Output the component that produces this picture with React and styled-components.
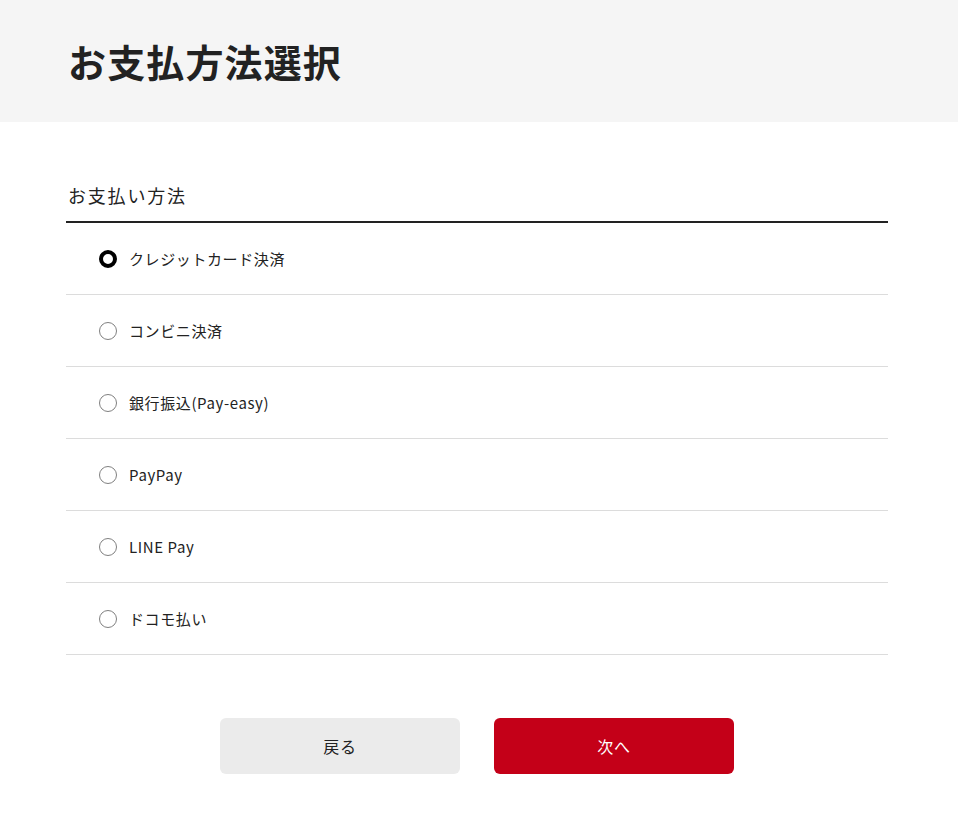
import React, { useState } from 'react';
import styled, { createGlobalStyle } from 'styled-components';

const GlobalStyle = createGlobalStyle`
  body {
    margin: 0;
    background: #fff;
    color: #222;
    font-family: "Noto Sans CJK JP", "Noto Sans", sans-serif;
  }
`;

const Header = styled.header`
  background: #f5f5f5;
  height: 122px;
  display: flex;
  align-items: center;
  padding-left: 68px;
`;

const Title = styled.h1`
  margin: 0;
  font-size: 38px;
  font-weight: 700;
  letter-spacing: 0.03em;
  line-height: 1;
  color: #222;
`;

const Main = styled.main`
  padding: 59px 70px 0 66px;
`;

const SectionTitle = styled.h2`
  margin: 0;
  font-size: 18px;
  font-weight: 400;
  line-height: 28px;
  letter-spacing: 0.1em;
  padding: 0 0 12px 2px;
  border-bottom: 2px solid #222;
`;

const List = styled.ul`
  list-style: none;
  margin: 0;
  padding: 0;
`;

const Row = styled.li`
  height: 71px;
  border-bottom: 1px solid #dcdcdc;
  display: flex;
  align-items: center;
  padding-left: 33px;
  gap: 12px;
  cursor: pointer;
`;

const Radio = styled.span`
  box-sizing: border-box;
  width: 18px;
  height: 18px;
  border-radius: 50%;
  background: #fff;
  border: ${(p) => (p.$checked ? '4px solid #000' : '1px solid #808080')};
  flex-shrink: 0;
`;

const Label = styled.span`
  font-size: 15px;
  letter-spacing: 0.04em;
  color: #222;
`;

const Actions = styled.div`
  display: flex;
  justify-content: center;
  gap: 34px;
  margin-top: 63px;
`;

const Button = styled.button`
  width: 240px;
  height: 56px;
  border: none;
  border-radius: 6px;
  font-family: inherit;
  font-size: 16px;
  letter-spacing: 0.04em;
  cursor: pointer;
  background: ${(p) => (p.$primary ? '#c40018' : '#ebebeb')};
  color: ${(p) => (p.$primary ? '#fff' : '#222')};
`;

const methods = [
  'クレジットカード決済',
  'コンビニ決済',
  '銀行振込(Pay-easy)',
  'PayPay',
  'LINE Pay',
  'ドコモ払い',
];

export default function App() {
  const [selected, setSelected] = useState(0);
  return (
    <>
      <GlobalStyle />
      <Header>
        <Title>お支払方法選択</Title>
      </Header>
      <Main>
        <SectionTitle>お支払い方法</SectionTitle>
        <List>
          {methods.map((m, i) => (
            <Row key={m} onClick={() => setSelected(i)}>
              <Radio $checked={selected === i} />
              <Label>{m}</Label>
            </Row>
          ))}
        </List>
        <Actions>
          <Button>戻る</Button>
          <Button $primary>次へ</Button>
        </Actions>
      </Main>
    </>
  );
}
